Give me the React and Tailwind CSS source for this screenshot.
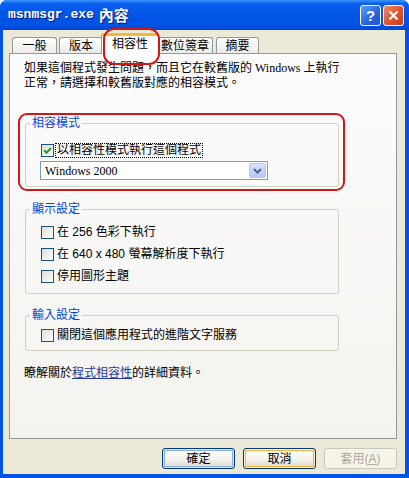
import React from "react";

const ui = "font-['Liberation_Sans','Noto_Sans_CJK_TC',sans-serif]";
const serif = "font-['Liberation_Serif','Noto_Sans_CJK_TC',serif]";

function Check({ checked }) {
  return (
    <span className="w-[13px] h-[13px] shrink-0 border border-[#1c5180] bg-[linear-gradient(135deg,#dcdcd7,#ffffff)] flex items-center justify-center">
      {checked && (
        <svg width="9" height="9" viewBox="0 0 9 9">
          <path d="M1 4.2 L3.5 6.7 L8 2" fill="none" stroke="#21a121" strokeWidth="2" />
        </svg>
      )}
    </span>
  );
}

function Row({ children }) {
  return (
    <div className="h-[22px] flex items-center gap-[3px]">
      <Check />
      <span className="leading-[14px]">{children}</span>
    </div>
  );
}

function Group({ title, children }) {
  return (
    <fieldset className="w-full border border-[#d0d0bf] rounded-[3px]">
      <legend className="ml-[4px] px-[2px] text-[#0046d5] leading-[14px]">{title}</legend>
      {children}
    </fieldset>
  );
}

function Tab({ label, width, active }) {
  if (active) {
    return (
      <div
        className={`${width} h-[21px] -mb-[1px] -mx-[2px] relative z-10 bg-white border border-b-0 border-[#919b9c] border-t-[3px] border-t-[#f5b839] rounded-t-[3px] flex justify-center`}
      >
        <span className="leading-[14px] mt-[1px]">{label}</span>
        {/* red annotation */}
        <div className="absolute left-[1px] -right-[2px] -top-[8px] -bottom-[11px] border-2 border-[#d01818] rounded-[11px]" />
      </div>
    );
  }
  return (
    <div
      className={`${width} h-[16px] border border-b-0 border-[#919b9c] rounded-t-[3px] bg-[linear-gradient(to_bottom,#ffffff,#ecebe6)] flex items-center justify-center`}
    >
      <span className="leading-[14px]">{label}</span>
    </div>
  );
}

function Button({ children, kind }) {
  if (kind === "disabled") {
    return (
      <div className="w-[73px] h-[21px] rounded-[3px] border border-[#c9c7ba] bg-[#f5f4ea] text-[#aca899] flex items-center justify-center">
        {children}
      </div>
    );
  }
  const ring =
    kind === "default"
      ? "shadow-[inset_0_0_0_1px_#cee7ff,inset_0_0_0_2px_#89ade4]"
      : "shadow-[inset_0_0_0_1px_#fff0cf,inset_0_0_0_2px_#f5b13a]";
  return (
    <div
      className={`w-[73px] h-[21px] rounded-[3px] border border-[#003c74] bg-[linear-gradient(to_bottom,#ffffff,#f3f2ec_55%,#dcd7cb)] ${ring} flex items-center justify-center`}
    >
      {children}
    </div>
  );
}

export default function App() {
  return (
    <div className={`w-[409px] h-[478px] flex flex-col bg-[#0054e3] rounded-t-[7px] overflow-hidden text-[12px] text-black ${ui}`}>
      {/* title bar */}
      <div className="h-[30px] shrink-0 flex items-center pl-[8px] pr-[5px] bg-[linear-gradient(to_bottom,#3d95ff_0%,#0a5fef_12%,#0055e5_50%,#0053e3_85%,#0046d5_100%)]">
        <span className="font-['Liberation_Mono',monospace] font-bold text-[13px] text-white [text-shadow:1px_1px_#0a1883]">
          msnmsgr.exe
        </span>
        <span className="ml-[5px] font-['Noto_Sans_CJK_TC',sans-serif] font-bold text-[15px] text-white [text-shadow:1px_1px_#0a1883]">
          內容
        </span>
        <div className="ml-auto flex gap-[2px]">
          <div className="w-[21px] h-[21px] rounded-[3px] border border-white bg-[linear-gradient(135deg,#5b9cff,#2663e0_60%,#1f55d0)] flex items-center justify-center text-white font-bold text-[15px] leading-none font-['Liberation_Sans',sans-serif]">
            ?
          </div>
          <div className="w-[21px] h-[21px] rounded-[3px] border border-white bg-[linear-gradient(135deg,#f08a6a,#e0502c_55%,#c83c1c)] flex items-center justify-center">
            <svg width="11" height="11" viewBox="0 0 11 11">
              <path d="M1.5 1.5 L9.5 9.5 M9.5 1.5 L1.5 9.5" stroke="white" strokeWidth="2.2" />
            </svg>
          </div>
        </div>
      </div>

      {/* body */}
      <div className="flex-1 flex flex-col ml-[3px] mr-[4px] mb-[4px] bg-[#ece9d8] pl-[6px] pr-[8px] pt-[5px] pb-[5px]">
        <div className="h-[18px] shrink-0 flex items-end pl-[3px] relative z-10">
          <Tab label="一般" width="w-[45px]" />
          <div className="w-[2px]" />
          <Tab label="版本" width="w-[44px]" />
          <Tab label="相容性" width="w-[58px]" active />
          <Tab label="數位簽章" width="w-[56px]" />
          <div className="w-[3px]" />
          <Tab label="摘要" width="w-[43px]" />
        </div>

        <div className="flex-1 border border-[#919b9c] bg-[linear-gradient(to_bottom,#fcfcfe,#f4f3ee)] pl-[14px] pt-[7px] flex flex-col">
          <p className={`leading-[15px] ${serif}`}>
            如果這個程式發生問題，而且它在較舊版的 Windows 上執行
            <br />
            正常，請選擇和較舊版對應的相容模式。
          </p>

          <div className="relative w-[314px] ml-[1px] mt-[25px]">
            <Group title="相容模式">
              <div className="pl-[15px] pt-[12px] pb-[6px]">
                <div className="h-[16px] flex items-center">
                  <Check checked />
                  <span className="ml-[1px] px-[1px] border border-dotted border-black leading-[13px]">
                    以相容性模式執行這個程式
                  </span>
                </div>
                <div className="mt-[3px] -ml-[1px] w-[228px] h-[19px] border border-[#7f9db9] bg-white flex items-center justify-between pl-[4px] pr-[1px]">
                  <span className={`leading-[14px] ${serif}`}>Windows 2000</span>
                  <div className="w-[17px] h-[15px] rounded-[2px] border border-[#b4c8f4] bg-[linear-gradient(to_bottom,#d6e2fd,#b3c8f7)] flex items-center justify-center">
                    <svg width="9" height="6" viewBox="0 0 9 6">
                      <path d="M1 1 L4.5 4.5 L8 1" fill="none" stroke="#4d6185" strokeWidth="2" />
                    </svg>
                  </div>
                </div>
              </div>
            </Group>
            {/* red annotation */}
            <div className="absolute -left-[7px] -right-[6px] -top-[3px] -bottom-[4px] border-2 border-[#d01818] rounded-[9px] pointer-events-none" />
          </div>

          <div className="w-[314px] ml-[1px] mt-[15px]">
            <Group title="顯示設定">
              <div className="pl-[15px] pt-[5px] pb-[6px]">
                <Row>在 256 色彩下執行</Row>
                <Row>在 640 x 480 螢幕解析度下執行</Row>
                <Row>停用圖形主題</Row>
              </div>
            </Group>
          </div>

          <div className="w-[314px] ml-[1px] mt-[14px]">
            <Group title="輸入設定">
              <div className="pl-[15px] pt-[2px] pb-[4px]">
                <Row>關閉這個應用程式的進階文字服務</Row>
              </div>
            </Group>
          </div>

          <p className="mt-[15px] leading-[15px]">
            瞭解關於<span className="text-[#1f3c9e] underline">程式相容性</span>的詳細資料。
          </p>
        </div>

        <div className="mt-[9px] flex justify-end gap-[8px]">
          <Button kind="default">確定</Button>
          <Button kind="hover">取消</Button>
          <Button kind="disabled">
            套用(<span className="underline">A</span>)
          </Button>
        </div>
      </div>
    </div>
  );
}
